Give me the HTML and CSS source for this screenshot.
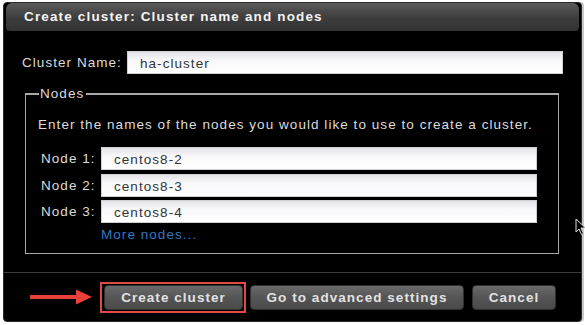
FILE: index.html
```html
<!DOCTYPE html>
<html>
<head>
<meta charset="utf-8">
<link rel="stylesheet" href="styles.css">
</head>
<body>
<div class="dialog">
  <div class="titlebar">Create cluster: Cluster name and nodes</div>
  <div class="content">
    <div class="row cluster-row">
      <label class="lbl cluster-lbl">Cluster Name:</label>
      <div class="field cluster-field">ha-cluster</div>
    </div>
    <fieldset class="nodes">
      <legend class="legend">Nodes</legend>
      <p class="intro">Enter the names of the nodes you would like to use to create a cluster.</p>
      <div class="row node-row">
        <label class="lbl node-lbl">Node 1:</label>
        <div class="field node-field">centos8-2</div>
      </div>
      <div class="row node-row">
        <label class="lbl node-lbl">Node 2:</label>
        <div class="field node-field">centos8-3</div>
      </div>
      <div class="row node-row">
        <label class="lbl node-lbl">Node 3:</label>
        <div class="field node-field">centos8-4</div>
      </div>
      <a class="more">More nodes...</a>
    </fieldset>
  </div>
  <div class="footer">
    <svg class="arrow" width="62" height="18" viewBox="0 0 62 18">
      <path d="M1 9 H48" stroke="#e8413b" stroke-width="4" stroke-linecap="round"/>
      <path d="M46 1.5 L62 9 L46 16.5 Z" fill="#e8413b"/>
    </svg>
    <span class="highlight"><button class="btn btn-create">Create cluster</button></span>
    <button class="btn btn-adv">Go to advanced settings</button>
    <button class="btn btn-cancel">Cancel</button>
  </div>
  <svg class="cursor" width="12" height="18" viewBox="0 0 12 18">
    <path d="M1 1 L1 14 L4 11 L6.5 16.5 L8.5 15.5 L6 10 L10.5 10 Z" fill="#000" stroke="#ddd" stroke-width="1"/>
  </svg>
</div>
</body>
</html>
```
FILE: styles.css
```css
html, body {
  margin: 0;
  padding: 0;
  background: #fff;
}
body {
  font-family: "Liberation Sans", Arial, sans-serif;
  letter-spacing: 1.05px;
}
.dialog {
  position: relative;
  box-sizing: border-box;
  margin: 2px 0 0 3px;
  width: 579px;
  height: 320px;
  background: #000;
  border: 1px solid #2b2b2b;
  border-radius: 4px;
  display: flex;
  flex-direction: column;
  box-shadow: 2px 0 0 #c8c8c8;
}
.titlebar {
  margin: 0 2px 0 2px;
  height: 28px;
  box-sizing: border-box;
  padding-left: 18px;
  line-height: 28px;
  font-size: 13.5px;
  font-weight: bold;
  color: #f4f4f4;
  letter-spacing: 1.15px;
  background: linear-gradient(#5a5a5a, #3c3c3c 55%, #333);
  border-radius: 6px 6px 4px 4px;
}
.content {
  padding: 20px 0 0 18px;
}
.row {
  display: flex;
  align-items: center;
}
.lbl {
  color: #dcdcdc;
  font-size: 13.5px;
}
.cluster-lbl {
  width: 105px;
}
.field {
  box-sizing: border-box;
  height: 23px;
  line-height: 23px;
  padding-left: 12px;
  font-size: 13.5px;
  color: #333;
  background: linear-gradient(#e4e4e8, #f8f8fa 40%, #fff);
  border: 1px solid #cfcfd4;
}
.cluster-field {
  width: 436px;
}
.nodes {
  box-sizing: border-box;
  margin: 12px 0 0 3px;
  width: 534px;
  padding: 15px 0 10px 12px;
  border: 1px solid #a8a8a8;
  border-top-width: 2px;
}
.legend {
  color: #dcdcdc;
  font-size: 13.5px;
  line-height: 16px;
  padding: 0 2px 0 1px;
  margin-left: 1px;
}
.intro {
  margin: 0 0 14px 0;
  color: #dcdcdc;
  font-size: 13.5px;
  line-height: 16px;
}
.node-row {
  margin-bottom: 3.5px;
}
.node-lbl {
  width: 60px;
  margin-left: 3px;
}
.node-field {
  width: 436px;
}
.more {
  display: block;
  margin: 0 0 0 63px;
  color: #3577c4;
  font-size: 13.5px;
  line-height: 16px;
}
.footer {
  margin-top: auto;
  height: 49px;
  box-sizing: border-box;
  border-top: 1px solid #3d3d3d;
  display: flex;
  align-items: center;
  padding-left: 26px;
}
.arrow {
  margin-right: 8px;
}
.highlight {
  display: flex;
  padding: 1px 1px 1px 2px;
  border: 2px solid #e04a44;
  margin-right: 4px;
}
.btn {
  height: 25px;
  box-sizing: border-box;
  border: 1px solid #303030;
  border-radius: 4px;
  background: linear-gradient(#6a6a6a, #555 50%, #4a4a4a);
  color: #e2e2e2;
  font-family: "Liberation Sans", Arial, sans-serif;
  font-weight: bold;
  font-size: 13.5px;
  letter-spacing: 1.05px;
  padding: 0;
  cursor: default;
}
.btn-create {
  width: 139px;
}
.btn-adv {
  width: 214px;
  margin-right: 8px;
}
.btn-cancel {
  width: 84px;
}
.cursor {
  position: absolute;
  left: 571px;
  top: 215px;
}
```
